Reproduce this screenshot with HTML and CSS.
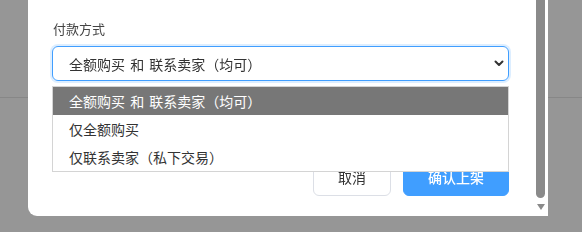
FILE: index.html
```html
<!DOCTYPE html>
<html lang="zh-CN">
<head>
    <meta charset="UTF-8">
    <meta name="viewport" content="width=device-width, initial-scale=1.0">
    <title>上架商品</title>
    <link rel="stylesheet" href="styles.css">
</head>
<body>
    <header class="page-header"></header>

    <div class="overlay"></div>

    <div class="modal">
        <div class="modal-body">
            <div class="field">
                <label class="field-label">付款方式</label>
                <div class="select">
                    <div class="select-trigger">
                        <span>全额购买 和 联系卖家（均可）</span>
                        <svg class="chevron" width="10" height="7" viewBox="0 0 10 7">
                            <path d="M1.5 1.5 L5 5 L8.5 1.5" fill="none" stroke="#333" stroke-width="2" stroke-linecap="round" stroke-linejoin="round"/>
                        </svg>
                    </div>
                    <ul class="select-options">
                        <li class="option active">全额购买 和 联系卖家（均可）</li>
                        <li class="option">仅全额购买</li>
                        <li class="option">仅联系卖家（私下交易）</li>
                    </ul>
                </div>
            </div>

            <div class="modal-footer">
                <button class="btn btn-cancel">取消</button>
                <button class="btn btn-primary">确认上架</button>
            </div>
        </div>

        <div class="scrollbar">
            <div class="scroll-thumb"></div>
            <div class="scroll-arrow"></div>
        </div>
    </div>
</body>
</html>
```

FILE: styles.css
```css
* {
    margin: 0;
    padding: 0;
    box-sizing: border-box;
}

body {
    font-family: 'Noto Sans CJK SC', 'Noto Sans', sans-serif;
    background-color: #fff;
    color: #333;
    height: 232px;
    overflow: hidden;
}

/* Page behind the dialog */
.page-header {
    height: 98px;
    border-bottom: 1px solid #e6e6e6;
}

.overlay {
    position: fixed;
    inset: 0;
    background: rgba(0, 0, 0, 0.41);
}

/* Dialog */
.modal {
    position: fixed;
    left: 28px;
    top: -12px;
    width: 520px;
    height: 228px;
    background-color: #fff;
    border-radius: 0 0 0 9px;
    display: flex;
    overflow: hidden;
}

.modal-body {
    flex: 1;
    padding: 32px 24px 0 24px;
}

.field-label {
    display: block;
    font-size: 13px;
    line-height: 18px;
    color: #444;
    margin-left: 1px;
    margin-bottom: 8px;
}

/* Select */
.select {
    position: relative;
}

.select-trigger {
    height: 35px;
    border: 1px solid #409eff;
    border-radius: 6px;
    box-shadow: 0 0 0 2px rgba(64, 158, 255, 0.18);
    display: flex;
    align-items: center;
    justify-content: space-between;
    padding: 0 4px 0 16px;
    font-size: 14px;
    color: #333;
    word-spacing: 2px;
}

.chevron {
    display: block;
}

.select-options {
    list-style: none;
    position: absolute;
    top: 40px;
    left: 0;
    right: 0;
    background-color: #fff;
    border: 1px solid #d4d4d4;
    z-index: 10;
}

.option {
    height: 28px;
    line-height: 28px;
    padding-left: 16px;
    font-size: 14px;
    color: #333;
    word-spacing: 2px;
}

.option.active {
    background-color: #777;
    color: #fff;
}

/* Footer */
.modal-footer {
    display: flex;
    justify-content: flex-end;
    gap: 12px;
    margin-top: 79px;
}

.btn {
    height: 36px;
    border-radius: 6px;
    font-family: inherit;
    font-size: 14px;
    padding-bottom: 3px;
    cursor: pointer;
}

.btn-cancel {
    width: 78px;
    background-color: #fff;
    border: 1px solid #dcdfe6;
    color: #333;
}

.btn-primary {
    width: 106px;
    background-color: #409eff;
    border: 1px solid #409eff;
    color: #fff;
    font-weight: 500;
}

/* Scrollbar of the dialog */
.scrollbar {
    width: 15px;
    display: flex;
    flex-direction: column;
}

.scroll-thumb {
    flex: 1;
    margin: 0 3px;
    background-color: #8a8a8a;
    border-radius: 5px;
}

.scroll-arrow {
    height: 18px;
    display: flex;
    align-items: center;
    justify-content: center;
}

.scroll-arrow::after {
    content: '';
    border-left: 4.5px solid transparent;
    border-right: 4.5px solid transparent;
    border-top: 6px solid #8a8a8a;
}
```
